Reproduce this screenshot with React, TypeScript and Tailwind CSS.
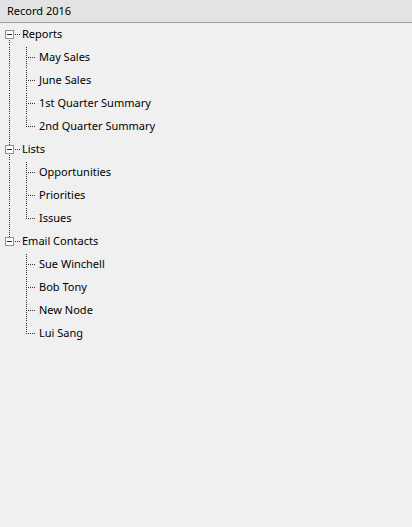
import React from "react";

type Node = { label: string; children: string[] };

const tree: Node[] = [
  { label: "Reports", children: ["May Sales", "June Sales", "1st Quarter Summary", "2nd Quarter Summary"] },
  { label: "Lists", children: ["Opportunities", "Priorities", "Issues"] },
  { label: "Email Contacts", children: ["Sue Winchell", "Bob Tony", "New Node", "Lui Sang"] },
];

const LINE = "#333333";

// dotted 1px line drawn pixel by pixel
function VDots({ x, y1, y2 }: { x: number; y1: number; y2: number }) {
  const dots = [];
  for (let y = y1; y <= y2; y += 2) dots.push(<rect key={y} x={x} y={y} width={1} height={1} fill={LINE} />);
  return <>{dots}</>;
}

function HDots({ y, x1, x2 }: { y: number; x1: number; x2: number }) {
  const dots = [];
  for (let x = x1; x <= x2; x += 2) dots.push(<rect key={x} x={x} y={y} width={1} height={1} fill={LINE} />);
  return <>{dots}</>;
}

function RootGlyph({ first, last }: { first: boolean; last: boolean }) {
  return (
    <svg width={22} height={23} className="shrink-0" shapeRendering="crispEdges">
      {!first && <VDots x={9} y1={0} y2={6} />}
      {!last && <VDots x={9} y1={17} y2={22} />}
      <rect x={5.5} y={7.5} width={8} height={8} fill="#ffffff" stroke="#919191" />
      <rect x={7} y={11} width={5} height={1} fill="#2a2a2a" />
      <HDots y={11} x1={15} x2={19} />
    </svg>
  );
}

function ChildGlyph({ rootLast, last }: { rootLast: boolean; last: boolean }) {
  return (
    <svg width={39} height={23} className="shrink-0" shapeRendering="crispEdges">
      {!rootLast && <VDots x={9} y1={1} y2={22} />}
      <VDots x={26} y1={1} y2={last ? 11 : 22} />
      <HDots y={11} x1={28} x2={34} />
    </svg>
  );
}

export default function App() {
  return (
    <div className="w-[412px] h-[527px] bg-[#f0f0f0] text-black text-[11px] font-['Segoe_UI','Noto_Sans',sans-serif] overflow-hidden">
      <div className="h-[23px] bg-[#e3e3e3] border-b border-[#a0a0a0] flex items-center px-[7px]">
        Record 2016
      </div>
      <div className="flex flex-col">
        {tree.map((n, i) => (
          <React.Fragment key={n.label}>
            <div className="h-[23px] flex items-center">
              <RootGlyph first={i === 0} last={i === tree.length - 1} />
              <span>{n.label}</span>
            </div>
            {n.children.map((c, j) => (
              <div key={c} className="h-[23px] flex items-center">
                <ChildGlyph rootLast={i === tree.length - 1} last={j === n.children.length - 1} />
                <span>{c}</span>
              </div>
            ))}
          </React.Fragment>
        ))}
      </div>
    </div>
  );
}
